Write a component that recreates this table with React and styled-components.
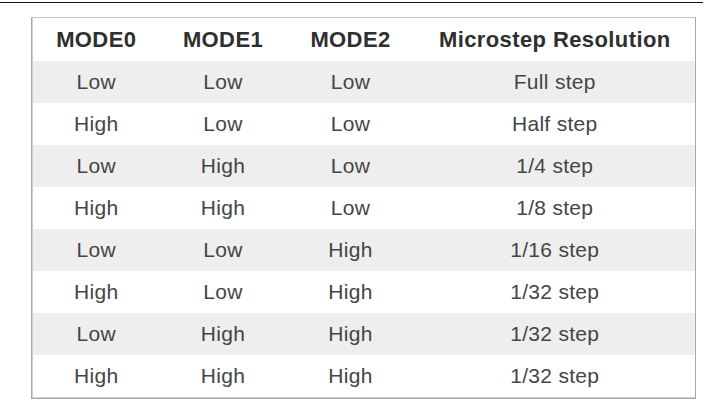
import * as React from 'react';
import styled, { createGlobalStyle } from 'styled-components';

const GlobalStyle = createGlobalStyle`
  html, body {
    margin: 0;
    padding: 0;
    background: #ffffff;
  }
  body {
    font-family: 'Liberation Sans', Arial, sans-serif;
  }
`;

const Page = styled.div`
  width: 707px;
  height: 415px;
  padding-top: 2px;
  box-sizing: border-box;
`;

const TopRule = styled.div`
  width: 703px;
  height: 1px;
  background: #111;
`;

const TableWrap = styled.div`
  margin: 14px 0 0 31px;
  width: 663px;
  border-left: 1px solid #a8a8a8;
  border-bottom: 1px solid #a8a8a8;
  border-right: 1px solid #a8a8a8;
  border-top: 1px solid #c4c4c4;
`;

const Table = styled.table`
  border-collapse: collapse;
  width: 100%;
  table-layout: fixed;
  border-left: 1px solid #d0d0d0;
  border-bottom: 1px solid #d0d0d0;
`;

const HeadCell = styled.th`
  height: 43px;
  padding: 0;
  font-size: 22px;
  letter-spacing: 0.4px;
  font-weight: bold;
  color: #2f2f2f;
  text-align: center;
  vertical-align: middle;
`;

const Row = styled.tr`
  background-color: ${(p) => (p.$shaded ? '#eeeeee' : '#ffffff')};
`;

const Cell = styled.td`
  height: 42px;
  padding: 0;
  font-size: 21px;
  letter-spacing: 0.3px;
  color: #454545;
  text-align: center;
  vertical-align: middle;
`;

const rows = [
  ['Low', 'Low', 'Low', 'Full step'],
  ['High', 'Low', 'Low', 'Half step'],
  ['Low', 'High', 'Low', '1/4 step'],
  ['High', 'High', 'Low', '1/8 step'],
  ['Low', 'Low', 'High', '1/16 step'],
  ['High', 'Low', 'High', '1/32 step'],
  ['Low', 'High', 'High', '1/32 step'],
  ['High', 'High', 'High', '1/32 step'],
];

export default function App() {
  return (
    <Page>
      <GlobalStyle />
      <TopRule />
      <TableWrap>
        <Table>
          <colgroup>
            <col style={{ width: 127 }} />
            <col style={{ width: 127 }} />
            <col style={{ width: 128 }} />
            <col />
          </colgroup>
          <thead>
            <tr>
              <HeadCell>MODE0</HeadCell>
              <HeadCell>MODE1</HeadCell>
              <HeadCell>MODE2</HeadCell>
              <HeadCell>Microstep Resolution</HeadCell>
            </tr>
          </thead>
          <tbody>
            {rows.map((r, i) => (
              <Row key={i} $shaded={i % 2 === 0}>
                {r.map((c, j) => (
                  <Cell key={j}>{c}</Cell>
                ))}
              </Row>
            ))}
          </tbody>
        </Table>
      </TableWrap>
    </Page>
  );
}
